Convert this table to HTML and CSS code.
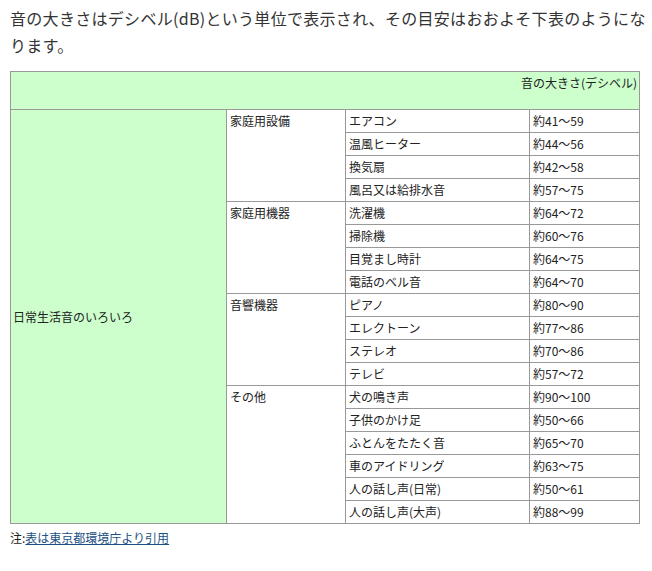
FILE: index.html
```html
<!DOCTYPE html>
<html lang="ja">
<head>
<meta charset="utf-8">
<link rel="stylesheet" href="styles.css">
</head>
<body>
<div class="page">
  <p class="intro">音の大きさはデシベル(dB)という単位で表示され、その目安はおおよそ下表のようになります。</p>
  <table class="db-table">
    <colgroup>
      <col class="c1"><col class="c2"><col class="c3"><col class="c4">
    </colgroup>
    <tr class="head"><td colspan="4">音の大きさ(デシベル)</td></tr>
    <tr><td class="cat" rowspan="18">日常生活音のいろいろ</td><td class="grp" rowspan="4">家庭用設備</td><td>エアコン</td><td>約41～59</td></tr>
    <tr><td>温風ヒーター</td><td>約44～56</td></tr>
    <tr><td>換気扇</td><td>約42～58</td></tr>
    <tr><td>風呂又は給排水音</td><td>約57～75</td></tr>
    <tr><td class="grp" rowspan="4">家庭用機器</td><td>洗濯機</td><td>約64～72</td></tr>
    <tr><td>掃除機</td><td>約60～76</td></tr>
    <tr><td>目覚まし時計</td><td>約64～75</td></tr>
    <tr><td>電話のベル音</td><td>約64～70</td></tr>
    <tr><td class="grp" rowspan="4">音響機器</td><td>ピアノ</td><td>約80～90</td></tr>
    <tr><td>エレクトーン</td><td>約77～86</td></tr>
    <tr><td>ステレオ</td><td>約70～86</td></tr>
    <tr><td>テレビ</td><td>約57～72</td></tr>
    <tr><td class="grp" rowspan="6">その他</td><td>犬の鳴き声</td><td>約90～100</td></tr>
    <tr><td>子供のかけ足</td><td>約50～66</td></tr>
    <tr><td>ふとんをたたく音</td><td>約65～70</td></tr>
    <tr><td>車のアイドリング</td><td>約63～75</td></tr>
    <tr><td>人の話し声(日常)</td><td>約50～61</td></tr>
    <tr><td>人の話し声(大声)</td><td>約88～99</td></tr>
  </table>
  <p class="note">注:<a href="#">表は東京都環境庁より引用</a></p>
</div>
</body>
</html>
```
FILE: styles.css
```css
html, body {
  margin: 0;
  padding: 0;
  background: #fff;
}
.page {
  padding: 5px 0 0 10px;
  width: 642px;
  font-family: "Noto Sans CJK JP", "Noto Sans", sans-serif;
  color: #333;
}
.intro {
  margin: 0 0 12px 0;
  width: 638px;
  font-size: 16px;
  line-height: 27px;
  letter-spacing: 0.3px;
}
.db-table {
  border-collapse: collapse;
  table-layout: fixed;
  width: 629px;
  font-size: 12px;
  line-height: 14px;
  color: #222;
}
.c1 { width: 216px; }
.c2 { width: 119px; }
.c3 { width: 184px; }
.c4 { width: 110px; }
.db-table td {
  border: 1px solid #999;
  padding: 4px 3px;
  height: 14px;
  vertical-align: middle;
  white-space: nowrap;
  overflow: hidden;
}
.db-table tr.head td {
  background: #ccffcc;
  text-align: right;
  vertical-align: top;
  height: 29px;
  padding: 4px 2px;
}
.db-table td.cat {
  background: #ccffcc;
  vertical-align: middle;
  padding-left: 2px;
}
.db-table td.grp {
  vertical-align: top;
}
.note {
  margin: 7px 0 0 0;
  font-size: 12px;
  line-height: 14px;
  color: #222;
}
.note a {
  color: #1c4f82;
  text-decoration: underline;
}
```
